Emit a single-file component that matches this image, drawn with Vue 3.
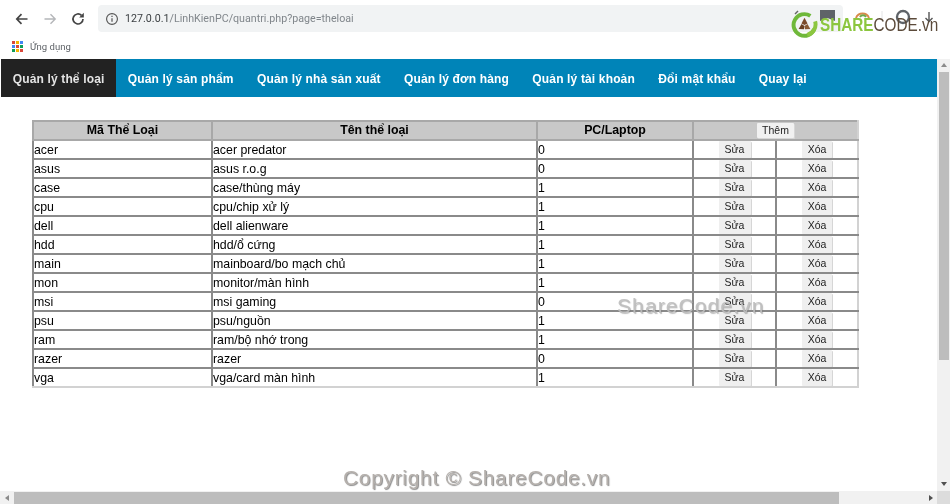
<script setup>
const navItems = ['Quản lý thể loại','Quản lý sản phẩm','Quản lý nhà sản xuất','Quản lý đơn hàng','Quản lý tài khoản','Đổi mật khẩu','Quay lại']
const rows = [
  ['acer','acer predator',0],['asus','asus r.o.g',0],['case','case/thùng máy',1],['cpu','cpu/chip xử lý',1],
  ['dell','dell alienware',1],['hdd','hdd/ổ cứng',1],['main','mainboard/bo mạch chủ',1],['mon','monitor/màn hình',1],
  ['msi','msi gaming',0],['psu','psu/nguồn',1],['ram','ram/bộ nhớ trong',1],['razer','razer',0],['vga','vga/card màn hình',1]
]
const dots = ['#d9483b','#f4b400','#4285f4','#4285f4','#d9483b','#0f9d58','#0f9d58','#f4b400','#d9483b']
</script>

<template>
  <div class="page">
    <header class="chrome">
      <div class="toolbar">
        <svg class="tool" viewBox="0 0 16 16" width="16" height="16"><path d="M13.5 8H3M7.5 3.2 2.8 8l4.7 4.8" fill="none" stroke="#444" stroke-width="1.7"/></svg>
        <svg class="tool" viewBox="0 0 16 16" width="16" height="16"><path d="M2.5 8H13M8.5 3.2 13.2 8l-4.7 4.8" fill="none" stroke="#b4b6b9" stroke-width="1.4"/></svg>
        <svg class="tool" viewBox="0 0 16 16" width="16" height="16"><path d="M13 8a5 5 0 1 1-1.5-3.6" fill="none" stroke="#444" stroke-width="1.7"/><path d="M13.8 1.8v4.6H9.2z" fill="#444"/></svg>
        <div class="omnibox">
          <svg viewBox="0 0 16 16" width="14" height="14"><circle cx="8" cy="8" r="6.2" fill="none" stroke="#555" stroke-width="1.3"/><path d="M8 7v4.2M8 4.4v1.4" stroke="#555" stroke-width="1.4"/></svg>
          <span class="url"><b>127.0.0.1</b>/LinhKienPC/quantri.php?page=theloai</span>
        </div>
      </div>
      <div class="bookmarks">
        <span class="apps"><i v-for="(c, i) in dots" :key="i" :style="{ background: c }"></i></span>
        <span>Ứng dụng</span>
      </div>
      <svg class="extras" viewBox="0 0 160 40" width="160" height="40">
        <path d="M5 14l3-3" stroke="#666" stroke-width="1.4"/>
        <path d="M30 10h15v11l-7.500-3-7.500 3z" fill="#5f6368"/>
        <path d="M66 18a7 7 0 0 1 13 0" fill="none" stroke="#d88a4a" stroke-width="2"/>
        <path d="M70 17a3.500 3.500 0 0 1 6 0" fill="none" stroke="#6fa84a" stroke-width="2"/>
        <path d="M92 11v10" stroke="#e4e5e7"/>
        <circle cx="113" cy="17" r="6" fill="none" stroke="#5f6368" stroke-width="2.400"/>
        <path d="M139 12v9M135.500 18l3.500 3.500 3.500-3.500" fill="none" stroke="#555" stroke-width="1.400"/>
      </svg>
      <div class="logo">
        <svg viewBox="0 0 30 30" width="27" height="27">
          <path d="M21.500 5.500A12 12 0 1 0 26 20" fill="none" stroke="#6fb83a" stroke-width="4.400"/>
          <path d="M26.800 11.500A12 12 0 0 1 18 26.500" fill="none" stroke="#8cc63f" stroke-width="4.400"/>
          <path d="M15 7.500l3.400 6.400-3.400 1.600-3.400-1.600z" fill="#7a4a2a"/>
          <path d="M8.500 20l3.200-5.600 3.300 2.400-.6 3.600z" fill="#6a3f22"/>
          <path d="M21.500 20l-3.200-5.600-3.300 2.400.6 3.600z" fill="#8a5a34"/>
        </svg>
        <span class="logo-text"><b>SHARE</b>CODE.vn</span>
      </div>
    </header>

    <div class="viewport">
      <main class="content">
        <nav class="nav">
          <a v-for="(n, i) in navItems" :key="n" class="nav-item" :class="{ active: i === 0 }">{{ n }}</a>
        </nav>
        <div class="table-wrap">
          <table class="grid">
            <colgroup>
              <col class="c1"><col class="c2"><col class="c3"><col class="c4"><col class="c5">
            </colgroup>
            <thead>
              <tr>
                <th>Mã Thể Loại</th><th>Tên thể loại</th><th>PC/Laptop</th>
                <th colspan="2"><button class="add">Thêm</button></th>
              </tr>
            </thead>
            <tbody>
              <tr v-for="r in rows" :key="r[0]">
                <td class="txt">{{ r[0] }}</td><td class="txt">{{ r[1] }}</td><td class="txt">{{ r[2] }}</td>
                <td><button class="edit">Sửa</button></td>
                <td><button class="del">Xóa</button></td>
              </tr>
            </tbody>
          </table>
        </div>
      </main>
      <aside class="vbar">
        <span class="arrow up"></span>
        <span class="vthumb"></span>
        <span class="arrow down"></span>
      </aside>
    </div>

    <div class="hbar">
      <span class="hcap"><span class="arrow left"></span></span>
      <span class="hthumb"></span>
      <span class="arrow right"></span>
      <span class="corner"></span>
    </div>

    <span class="wm wm-mid">ShareCode.vn</span>
    <span class="wm wm-bottom">Copyright © ShareCode.vn</span>
  </div>
</template>

<style>
html, body { margin: 0; background: #fff; overflow: hidden; }
</style>

<style scoped>
.page {
  position: relative;
  width: 950px;
  height: 504px;
  overflow: hidden;
  background: #fff;
  font-family: "Liberation Sans", Arial, sans-serif;
  filter: blur(0.3px);
}
.chrome { position: relative; height: 59px; }
.toolbar { display: flex; align-items: center; height: 37px; padding-left: 14px; box-sizing: border-box; }
.tool { margin-right: 12px; flex: none; }
.omnibox {
  display: flex; align-items: center; gap: 6px;
  width: 745px; height: 27px; padding-left: 7px;
  box-sizing: border-box; background: #f1f3f4; border-radius: 4px;
}
.url { font: 10.7px Roboto, sans-serif; color: #80868b; }
.url b { font-weight: 400; color: #3c4043; }
.bookmarks { display: flex; align-items: center; gap: 7px; height: 18px; padding-left: 12px; font: 9.5px Roboto, sans-serif; color: #5f6368; }
.apps { display: grid; grid-template-columns: repeat(3, 3px); gap: 1px; }
.apps i { display: block; width: 3px; height: 3px; }
.extras { position: absolute; left: 790px; top: 0; }
.logo { position: absolute; left: 791px; top: 11px; display: flex; align-items: center; }
.logo-text { display: inline-block; margin-left: 2px; font: 18px/1 "Liberation Sans", sans-serif; color: #5b4a3a; transform: scaleX(.85); transform-origin: left center; white-space: nowrap; }
.logo-text b { color: #8cc63f; }

.viewport { display: flex; height: 445px; }
.content { flex: 1; min-width: 0; padding-left: 1px; }
.nav { display: flex; height: 38px; background: #0084b8; }
.nav-item { display: flex; align-items: center; padding: 1px 11.7px 0; font-size: 12px; font-weight: 700; letter-spacing: .15px; color: #fff; }
.nav-item.active { background: #222; color: #e4e4e4; }

.table-wrap { padding: 23px 0 0 31px; }
.grid { border-collapse: collapse; table-layout: fixed; width: 825px; font-size: 12.35px; color: #000; }
.c1 { width: 179px; } .c2 { width: 325px; } .c3 { width: 156px; } .c4 { width: 83px; } .c5 { width: 82px; }
.grid th, .grid td { height: 19px; padding: 0; box-sizing: border-box; border: 2px solid #8a8a8a; line-height: 15px; }
.grid td.txt { padding-top: 2px; }
.grid thead th { background: #c8c8c8; text-align: center; border-color: #a8a8a8; }
.grid tr > :last-child { border-right-color: #d2d2d2; }
.grid tbody tr:last-child td { border-bottom-color: #d2d2d2; }
button {
  display: block; margin: -1px auto 0; height: 17px; padding: 0;
  border: 0; border-radius: 1px; background: #efefef; box-shadow: 1px 1px 0 #d6d6d6;
  font: 10.500px "Liberation Sans", sans-serif; color: #222;
}
.edit { width: 32px; }
.del { width: 30px; }
.add { width: 37px; height: 15px; background: #f1f1f1; }

.vbar { width: 13px; background: #f1f1f1; display: flex; flex-direction: column; }
.vthumb { display: block; width: 10px; margin-left: 2px; height: 288px; background: #bdbdbd; }
.arrow { display: block; width: 0; height: 0; }
.arrow.up { margin: 4px 0 5px 4px; border: 3px solid transparent; border-top: 0; border-bottom: 4px solid #8b8b8b; }
.arrow.down { margin: auto 0 18px 4px; border: 3px solid transparent; border-bottom: 0; border-top: 4px solid #505050; }
.hbar { position: absolute; left: 0; right: 0; bottom: 0; height: 13px; background: #f1f1f1; display: flex; align-items: center; }
.hcap { width: 14px; flex: none; display: flex; justify-content: center; }
.hthumb { display: block; width: 825px; height: 12px; background: #bdbdbd; flex: none; }
.arrow.left { border: 3px solid transparent; border-left: 0; border-right: 4px solid #8b8b8b; }
.arrow.right { margin-left: auto; margin-right: 4px; border: 3px solid transparent; border-right: 0; border-left: 4px solid #505050; }
.corner { width: 13px; height: 13px; background: #dcdcdc; flex: none; }

.wm { position: absolute; font-size: 21px; white-space: nowrap; }
.wm-mid { left: 617px; top: 294px; letter-spacing: 1.100px; color: rgba(190,190,190,.9); text-shadow: 1px 1px 1px rgba(120,120,120,.5); }
.wm-bottom { left: 343px; top: 466px; letter-spacing: .670px; color: #b5b0ac; text-shadow: 1px 1px 1px #8d8d8d; }
</style>
